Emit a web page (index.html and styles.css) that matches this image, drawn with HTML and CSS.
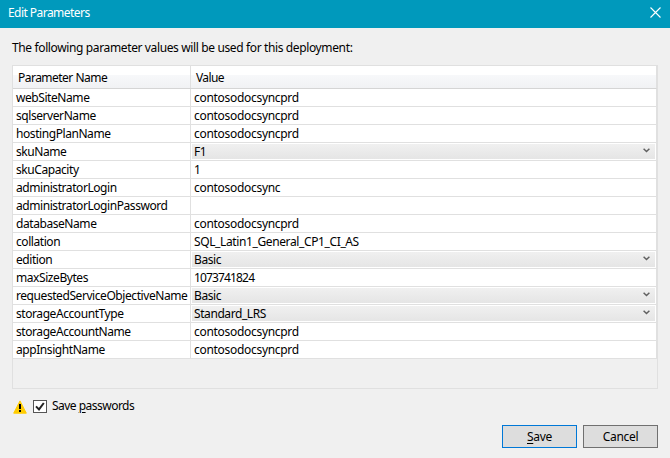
FILE: index.html
```html
<!DOCTYPE html>
<html lang="en">
<head>
<meta charset="utf-8">
<title>Edit Parameters</title>
<link rel="stylesheet" href="styles.css">
</head>
<body>
<div class="dialog">
  <header class="titlebar">
    <span class="title">Edit Parameters</span>
    <svg class="close" width="11" height="11" viewBox="0 0 11 11"><path d="M.5 .5l10 10M10.5 .5l-10 10"/></svg>
  </header>
  <main class="content">
    <p class="intro">The following parameter values will be used for this deployment:</p>
    <div class="grid">
      <div class="row head"><div class="name">Parameter Name</div><div class="value">Value</div></div>
      <div class="row"><div class="name">webSiteName</div><div class="value">contosodocsyncprd</div></div>
      <div class="row"><div class="name">sqlserverName</div><div class="value">contosodocsyncprd</div></div>
      <div class="row"><div class="name">hostingPlanName</div><div class="value">contosodocsyncprd</div></div>
      <div class="row"><div class="name">skuName</div><div class="value select">F1<svg class="chevron" width="7" height="5" viewBox="0 0 7 5"><path d="M.6 .8l2.9 2.7L6.4 .8"/></svg></div></div>
      <div class="row"><div class="name">skuCapacity</div><div class="value">1</div></div>
      <div class="row"><div class="name">administratorLogin</div><div class="value">contosodocsync</div></div>
      <div class="row"><div class="name">administratorLoginPassword</div><div class="value"></div></div>
      <div class="row"><div class="name">databaseName</div><div class="value">contosodocsyncprd</div></div>
      <div class="row"><div class="name">collation</div><div class="value caps">SQL_Latin1_General_CP1_CI_AS</div></div>
      <div class="row"><div class="name">edition</div><div class="value select">Basic<svg class="chevron" width="7" height="5" viewBox="0 0 7 5"><path d="M.6 .8l2.9 2.7L6.4 .8"/></svg></div></div>
      <div class="row"><div class="name">maxSizeBytes</div><div class="value digits">1073741824</div></div>
      <div class="row"><div class="name">requestedServiceObjectiveName</div><div class="value select">Basic<svg class="chevron" width="7" height="5" viewBox="0 0 7 5"><path d="M.6 .8l2.9 2.7L6.4 .8"/></svg></div></div>
      <div class="row"><div class="name">storageAccountType</div><div class="value select">Standard_LRS<svg class="chevron" width="7" height="5" viewBox="0 0 7 5"><path d="M.6 .8l2.9 2.7L6.4 .8"/></svg></div></div>
      <div class="row"><div class="name">storageAccountName</div><div class="value">contosodocsyncprd</div></div>
      <div class="row"><div class="name">appInsightName</div><div class="value">contosodocsyncprd</div></div>
    </div>
    <div class="options">
      <svg class="warning" width="14" height="14" viewBox="0 0 14 14"><path class="sign" d="M7 .9L13.3 13.2H.7z"/><path class="mark" d="M6 4h2v5H6zM6 10h2v2H6z"/></svg>
      <span class="checkbox"><svg width="12" height="11" viewBox="0 0 12 11"><path d="M2 5.4l3 3L9.8 2"/></svg></span>
      <span class="label">Save <u>p</u>asswords</span>
    </div>
    <div class="actions">
      <button class="button primary"><u>S</u>ave</button>
      <button class="button">Cancel</button>
    </div>
  </main>
</div>
</body>
</html>
```

FILE: styles.css
```css
* { box-sizing: border-box; }
body {
  margin: 0;
  background: #f0f0f0;
  color: #000;
  font: 12px/16px "Noto Sans", "Open Sans", sans-serif;
  letter-spacing: -0.3px;
}
.dialog { height: 458px; overflow: hidden; }
.titlebar {
  display: flex;
  justify-content: space-between;
  height: 28px;
  padding: 5px 9px 0 8px;
  background: #0099bc;
  color: #fff;
}
.title { letter-spacing: -0.55px; }
.close { margin-top: 2px; fill: none; stroke: #fff; stroke-width: 1.1; }
.content { padding: 12px 12px 0; }
.intro { margin: 0; height: 25px; letter-spacing: -0.37px; }
.grid {
  height: 324px;
  border: 1px solid #e0e0e0;
}
.row {
  display: flex;
  height: 18px;
  line-height: 18px;
  background: #fff;
  border-bottom: 1px solid #e0e0e0;
  border-right: 1px solid #e0e0e0;
  white-space: nowrap;
}
.name {
  width: 178px;
  padding-left: 3px;
  border-right: 1px solid #e0e0e0;
  letter-spacing: -0.43px;
}
.value { flex: 1; padding-left: 3px; }
.caps { letter-spacing: -0.38px; }
.digits { letter-spacing: -0.85px; }
.head {
  height: 23px;
  line-height: 23px;
  background: linear-gradient(#fff 0 9px, #f7f8fa 9px, #f1f2f4);
  border-bottom-color: #d5d5d5;
}
.head .name { padding-left: 5px; letter-spacing: -0.52px; }
.head .value { padding-left: 5px; letter-spacing: -0.6px; }
.select {
  display: flex;
  justify-content: space-between;
  margin: 1px;
  padding: 0 5px 0 2px;
  line-height: 16px;
  letter-spacing: -0.42px;
  background: linear-gradient(#f0f0f0, #e5e5e5);
}
.chevron { margin-top: 4px; fill: none; stroke: #606060; stroke-width: 1.5; }
.options { display: flex; height: 36px; padding: 9px 0 0 1px; }
.label { letter-spacing: -0.52px; }
.warning { margin-top: 2px; }
.sign { fill: #ffcc00; stroke: #ffcc00; stroke-width: 1; stroke-linejoin: round; }
.mark { fill: #000; }
.checkbox {
  width: 14px;
  height: 13px;
  margin: 2px 5px 0 6px;
  background: #fff;
  border: 1px solid #555;
}
.checkbox svg { display: block; fill: none; stroke: #222; stroke-width: 2; }
.actions { display: flex; justify-content: flex-end; gap: 6px; }
.button {
  width: 75px;
  height: 23px;
  padding: 0;
  border: 1px solid #707070;
  background: #dddddd;
  color: #000;
  font: inherit;
  letter-spacing: inherit;
}
.primary { border-color: #0078d7; }
u { text-underline-offset: 2px; text-decoration-thickness: 1px; }
```
